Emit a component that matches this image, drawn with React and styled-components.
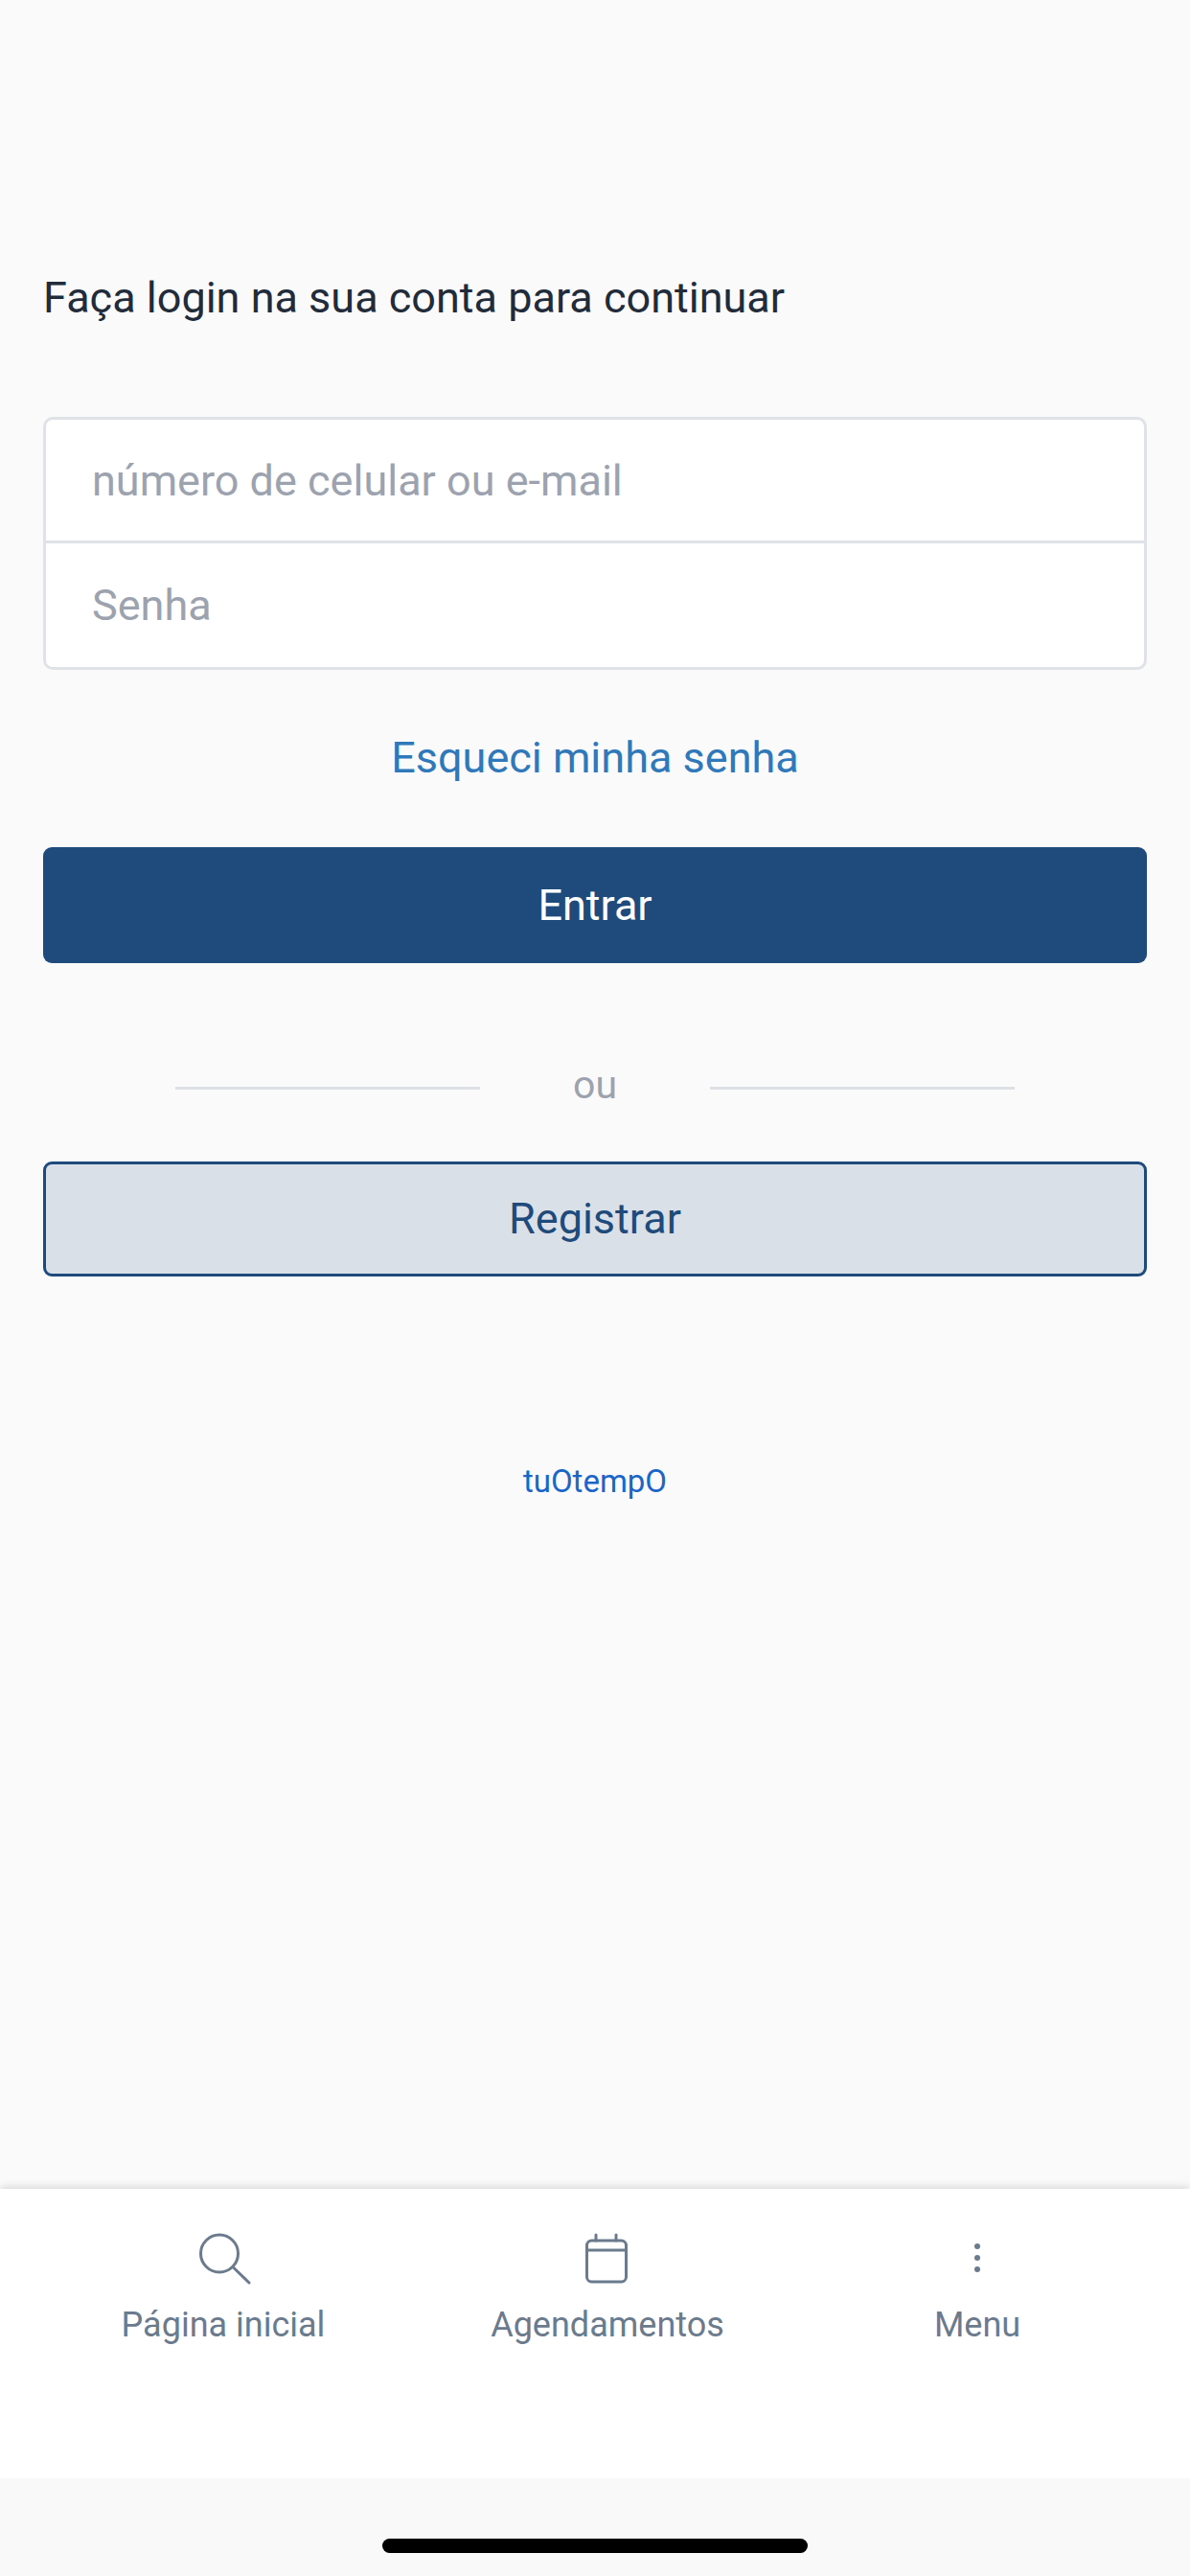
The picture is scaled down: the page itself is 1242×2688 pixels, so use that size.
import React from 'react'
import styled, { createGlobalStyle } from 'styled-components'

const GlobalStyle = createGlobalStyle`
html, body {
    margin: 0;
    padding: 0;
    background: #fafafa;
}
* {
    box-sizing: border-box;
}
`

const Page = styled.div`
width: 1242px;
height: 2688px;
display: flex;
flex-direction: column;
background: #fafafa;
font-family: Roboto, "Liberation Sans", sans-serif;
`

const Main = styled.main`
flex: 1;
display: flex;
flex-direction: column;
padding: 286px 45px 0;
`

const Title = styled.h1`
margin: 0 0 99px;
font-size: 45px;
line-height: 50px;
font-weight: 400;
color: #212b3a;
`

const InputGroup = styled.div`
height: 264px;
display: flex;
flex-direction: column;
background: #fff;
border: 3px solid #dfe3e8;
border-radius: 10px;
overflow: hidden;
`

const Input = styled.input`
height: ${(p) => (p.$divided ? '132px' : '126px')};
width: 100%;
padding: 0 0 0 48px;
border: 0;
border-top: ${(p) => (p.$divided ? '3px solid #dfe3e8' : '0')};
background: transparent;
font-family: inherit;
font-size: 45px;
color: #212b3a;

&::placeholder {
    color: #9ca3af;
    opacity: 1;
}

&:focus {
    outline: none;
}
`

const ForgotLink = styled.a`
margin: 67px 0 68px;
text-align: center;
font-size: 45px;
line-height: 50px;
color: #2f78b9;
`

const Button = styled.button`
height: ${(p) => (p.$outline ? '120px' : '121px')};
width: 100%;
padding: 0 0 ${(p) => (p.$outline ? '2px' : '0')};
border: ${(p) => (p.$outline ? '3px solid #1f4a7c' : '0')};
border-radius: 9px;
background: ${(p) => (p.$outline ? '#dae0e8' : '#1f4a7c')};
color: ${(p) => (p.$outline ? '#1f4a7c' : '#fff')};
font-family: inherit;
font-size: 45px;
`

const Divider = styled.div`
height: 50px;
margin: 103px 0 54px;
display: flex;
align-items: center;
justify-content: center;
`

const DividerLine = styled.span`
width: 318px;
height: 3px;
margin-top: 4px;
background: #dde1e6;
`

const DividerText = styled.span`
width: 240px;
margin-top: -3px;
text-align: center;
font-size: 41px;
line-height: 50px;
color: #9ca3af;
`

const Brand = styled.a`
margin-top: 194px;
text-align: center;
font-size: 33px;
line-height: 40px;
color: #1a66c8;
`

const TabBar = styled.nav`
height: 302px;
padding: 46px 4px 0 0;
display: grid;
grid-template-columns: 466px 336px 1fr;
align-items: start;
background: #fff;
box-shadow: 0 -2px 8px rgba(0, 0, 0, 0.14);
`

const Tab = styled.div`
display: flex;
flex-direction: column;
align-items: center;
color: #6b7b8d;
`

const TabIcon = styled.svg`
width: 60px;
height: 60px;
display: block;
fill: none;
stroke: currentColor;
stroke-width: 3;
stroke-linecap: round;
stroke-linejoin: round;
`

const TabLabel = styled.span`
margin-top: 14px;
font-size: 36px;
line-height: 44px;
`

const HomeArea = styled.div`
height: 102px;
padding-top: 63px;
display: flex;
justify-content: center;
align-items: flex-start;
background: #f9f9f9;
`

const HomeIndicator = styled.div`
width: 444px;
height: 15px;
border-radius: 8px;
background: #000;
`

const SearchIcon = () => (
    <TabIcon viewBox="0 0 60 60">
        <circle cx="26" cy="21.5" r="19.5" />
        <path d="M40 35.5 L57 52" />
    </TabIcon>
)

const CalendarIcon = () => (
    <TabIcon viewBox="0 0 60 60">
        <rect x="8.5" y="8" width="41" height="43" rx="5" />
        <path d="M8.5 18 H49.5 M18 2 V8 M39 2 V8" />
    </TabIcon>
)

const DotsIcon = () => (
    <TabIcon viewBox="0 0 60 60">
        <g fill="currentColor" stroke="none">
            <circle cx="30" cy="14" r="3" />
            <circle cx="30" cy="26" r="3" />
            <circle cx="30" cy="38" r="3" />
        </g>
    </TabIcon>
)

const App = () => {
    return (
        <>
            <GlobalStyle />
            <Page>
                <Main>
                    <Title>Faça login na sua conta para continuar</Title>
                    <InputGroup>
                        <Input type="text" placeholder="número de celular ou e-mail" />
                        <Input $divided type="password" placeholder="Senha" />
                    </InputGroup>
                    <ForgotLink>Esqueci minha senha</ForgotLink>
                    <Button>Entrar</Button>
                    <Divider>
                        <DividerLine />
                        <DividerText>ou</DividerText>
                        <DividerLine />
                    </Divider>
                    <Button $outline>Registrar</Button>
                    <Brand>tuOtempO</Brand>
                </Main>
                <TabBar>
                    <Tab>
                        <SearchIcon />
                        <TabLabel>Página inicial</TabLabel>
                    </Tab>
                    <Tab>
                        <CalendarIcon />
                        <TabLabel>Agendamentos</TabLabel>
                    </Tab>
                    <Tab>
                        <DotsIcon />
                        <TabLabel>Menu</TabLabel>
                    </Tab>
                </TabBar>
                <HomeArea>
                    <HomeIndicator />
                </HomeArea>
            </Page>
        </>
    )
}

export default App
